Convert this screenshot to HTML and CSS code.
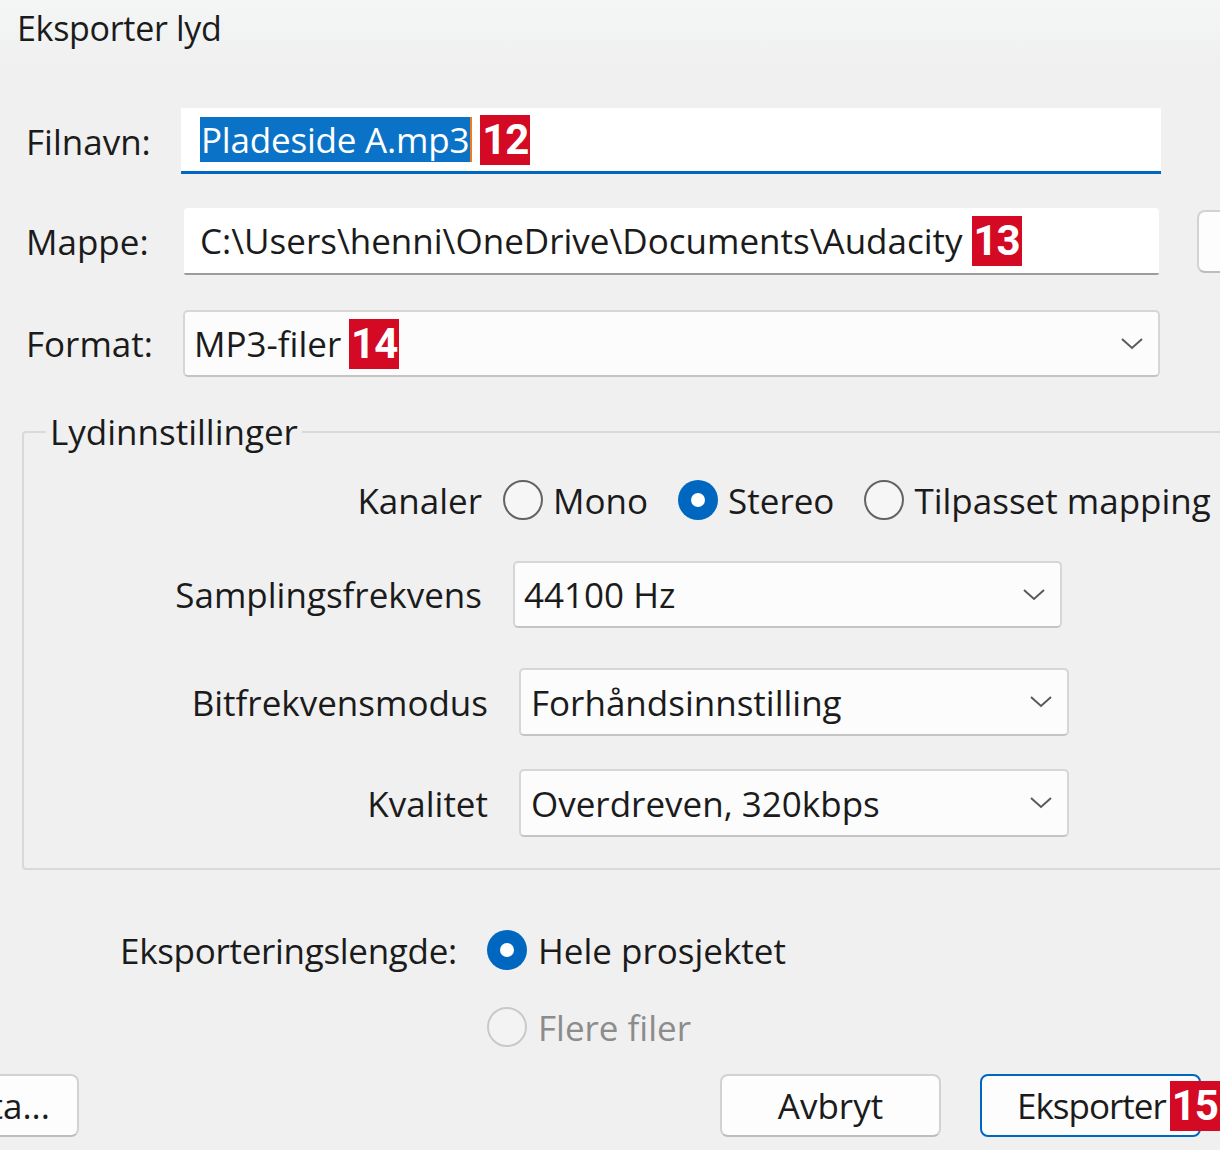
FILE: index.html
```html
<!DOCTYPE html>
<html lang="no">
<head>
<meta charset="utf-8">
<title>Eksporter lyd</title>
<link rel="stylesheet" href="styles.css">
</head>
<body>
<div class="dialog">
  <div class="titlebar">Eksporter lyd</div>

  <div class="fields">
    <div class="row row-file">
      <span class="label">Filnavn:</span>
      <div class="input input-focus">
        <span class="selected">Pladeside A.mp3</span><span class="caret"></span>
        <span class="badge">12</span>
      </div>
    </div>
    <div class="row row-folder">
      <span class="label">Mappe:</span>
      <div class="input input-folder">
        <span class="value">C:\Users\henni\OneDrive\Documents\Audacity</span>
        <span class="badge">13</span>
      </div>
      <button class="btn browse" aria-label="Bla gjennom"></button>
    </div>
    <div class="row row-format">
      <span class="label">Format:</span>
      <div class="select select-format">
        <span class="value">MP3-filer</span>
        <span class="badge">14</span>
        <svg class="chev" viewBox="0 0 24 14"><path d="M2 2 L12 11 L22 2"/></svg>
      </div>
    </div>
  </div>

  <fieldset class="group">
    <legend>Lydinnstillinger</legend>
    <div class="opt-row channels">
      <span class="opt-label">Kanaler</span>
      <div class="radios">
        <span class="radio"></span><span class="rtext">Mono</span>
        <span class="radio checked"></span><span class="rtext">Stereo</span>
        <span class="radio"></span><span class="rtext">Tilpasset mapping</span>
      </div>
    </div>
    <div class="opt-row sample">
      <span class="opt-label">Samplingsfrekvens</span>
      <div class="select">
        <span class="value">44100 Hz</span>
        <svg class="chev" viewBox="0 0 24 14"><path d="M2 2 L12 11 L22 2"/></svg>
      </div>
    </div>
    <div class="opt-row bitmode">
      <span class="opt-label">Bitfrekvensmodus</span>
      <div class="select">
        <span class="value">Forhåndsinnstilling</span>
        <svg class="chev" viewBox="0 0 24 14"><path d="M2 2 L12 11 L22 2"/></svg>
      </div>
    </div>
    <div class="opt-row quality">
      <span class="opt-label">Kvalitet</span>
      <div class="select">
        <span class="value">Overdreven, 320kbps</span>
        <svg class="chev" viewBox="0 0 24 14"><path d="M2 2 L12 11 L22 2"/></svg>
      </div>
    </div>
  </fieldset>

  <div class="range">
    <div class="range-row">
      <span class="range-label">Eksporteringslengde:</span>
      <span class="radio checked"></span><span class="rtext">Hele prosjektet</span>
    </div>
    <div class="range-row disabled">
      <span class="range-label"></span>
      <span class="radio"></span><span class="rtext">Flere filer</span>
    </div>
  </div>

  <div class="buttons">
    <button class="btn meta"><span>Metadata...</span></button>
    <span class="spacer"></span>
    <button class="btn cancel">Avbryt</button>
    <button class="btn primary"><span class="ptext">Eksporter</span><span class="badge">15</span></button>
  </div>
</div>
</body>
</html>
```

FILE: styles.css
```css
* { box-sizing: border-box; }

html, body {
  margin: 0;
  padding: 0;
  background: #f0f0f0;
}

body {
  width: 1220px;
  height: 1150px;
  overflow: hidden;
  font-family: "Open Sans", "Noto Sans", sans-serif;
  font-size: 35px;
  color: #1b1b1b;
}

.dialog {
  width: 1220px;
  height: 1150px;
  position: relative;
  overflow: hidden;
}

.titlebar {
  height: 60px;
  padding-left: 17px;
  line-height: 56px;
  font-size: 34px;
  letter-spacing: -0.3px;
  background: linear-gradient(#f4f6f6, #f0f0f0);
}

.fields {
  margin-top: 48px;
  display: flex;
  flex-direction: column;
}

.row {
  display: flex;
  align-items: stretch;
}

.row .label {
  flex: none;
  width: 181px;
  padding-left: 26px;
  display: flex;
  align-items: center;
}

.row-file { height: 66px; }
.row-folder { height: 67px; margin-top: 34px; }
.row-format { height: 67px; margin-top: 35px; }

.input {
  flex: none;
  display: flex;
  align-items: center;
  background: #ffffff;
  position: relative;
  white-space: nowrap;
}

.input-focus {
  width: 980px;
  padding-left: 19px;
  border-bottom: 3px solid #0067c0;
}

.selected {
  background: #0a73c8;
  color: #ffffff;
  line-height: 45px;
  padding: 0 1px;
  letter-spacing: -0.2px;
}

.caret {
  width: 2px;
  height: 45px;
  background: #f07a1e;
}

.badge {
  display: inline-flex;
  align-items: center;
  justify-content: center;
  width: 50px;
  height: 50px;
  background: #d40a25;
  color: #ffffff;
  font-family: "Roboto", "Liberation Sans", sans-serif;
  font-weight: 700;
  font-size: 42px;
  letter-spacing: -1px;
  margin-left: 8px;
  flex: none;
}

.input-folder {
  margin-left: 3px;
  width: 975px;
  padding-left: 16px;
  border-bottom: 2px solid #9c9c9c;
  border-radius: 4px 4px 2px 2px;
}

.input-folder .badge { margin-left: 9px; }

.btn {
  font-family: inherit;
  font-size: 35px;
  color: #1b1b1b;
  background: #fdfdfd;
  border: 2px solid #d2d2d2;
  border-bottom-color: #bdbdbd;
  border-radius: 8px;
  padding: 0;
}

.browse {
  margin-left: 38px;
  width: 200px;
  flex: none;
  height: 63px;
  align-self: center;
}

.select {
  flex: none;
  display: flex;
  align-items: center;
  background: #fcfcfc;
  border: 2px solid #d6d6d6;
  border-bottom-color: #c4c4c4;
  border-radius: 5px;
  position: relative;
  white-space: nowrap;
}

.select .value { flex: none; }

.select .chev {
  width: 24px;
  height: 14px;
  margin-left: auto;
  margin-right: 14px;
  fill: none;
  stroke: #5a5a5a;
  stroke-width: 2;
  flex: none;
}

.select-format {
  margin-left: 2px;
  width: 977px;
  padding-left: 9px;
}

.select-format .badge { margin-left: 8px; }

/* Group box */
.group {
  margin: 35px 0 0 22px;
  width: 1260px;
  padding: 0 0 31px 0;
  border: 2px solid #d9d9d9;
  border-right: none;
  border-radius: 4px 0 0 4px;
}

.group legend {
  margin-left: 22px;
  padding: 0 4px;
  line-height: 40px;
  font-size: 35px;
}

.opt-row {
  display: flex;
  align-items: stretch;
}

.opt-label {
  flex: none;
  display: flex;
  align-items: center;
  justify-content: flex-end;
  white-space: nowrap;
}

.channels { margin-top: 26px; height: 44px; }
.channels .opt-label { width: 458px; }
.channels .radios { margin-left: 21px; display: flex; align-items: center; }

.sample { margin-top: 39px; height: 67px; }
.sample .opt-label { width: 458px; }
.sample .select { margin-left: 31px; width: 549px; padding-left: 9px; }

.bitmode { margin-top: 40px; height: 68px; }
.quality { margin-top: 33px; height: 68px; }
.bitmode .opt-label, .quality .opt-label { width: 464px; }
.bitmode .select, .quality .select { margin-left: 31px; width: 550px; padding-left: 10px; }

.radio {
  width: 40px;
  height: 40px;
  border-radius: 50%;
  border: 2.5px solid #636363;
  background: #f6f6f6;
  flex: none;
  position: relative;
}

.radio.checked {
  border: none;
  background: #0067c0;
}

.radio.checked::after {
  content: "";
  position: absolute;
  left: 13px;
  top: 13px;
  width: 14px;
  height: 14px;
  border-radius: 50%;
  background: #ffffff;
}

.rtext { margin-left: 10px; margin-right: 30px; white-space: nowrap; }
.radios .rtext:last-child { margin-right: 0; }

/* Export range */
.range {
  display: flex;
  flex-direction: column;
  margin-top: 58px;
}

.range-row {
  display: flex;
  align-items: center;
  height: 44px;
}

.range-row + .range-row { margin-top: 33px; }

.range-label {
  flex: none;
  width: 487px;
  padding-left: 120px;
  white-space: nowrap;
  letter-spacing: -0.3px;
}

.range-row .rtext { margin-left: 11px; }

.range-row.disabled .radio {
  border-color: #c9c9c9;
  background: #f3f3f3;
}

.range-row.disabled .rtext { color: #8c8c8c; }

/* Buttons */
.buttons {
  display: flex;
  align-items: center;
  margin-top: 25px;
  height: 63px;
}

.buttons .btn { height: 63px; flex: none; }

.meta {
  margin-left: -141px;
  width: 220px;
  display: flex;
  align-items: center;
  justify-content: flex-end;
  padding-right: 27px;
  white-space: nowrap;
  overflow: hidden;
}

.spacer { flex: 1; }

.cancel { width: 221px; }

.primary {
  width: 221px;
  margin-left: 39px;
  margin-right: 19px;
  border: 2px solid #0067c0;
  display: flex;
  align-items: center;
  padding-left: 35px;
  overflow: visible;
}

.primary .ptext { letter-spacing: -1px; }
.primary .badge { margin-left: 4px; }
```
